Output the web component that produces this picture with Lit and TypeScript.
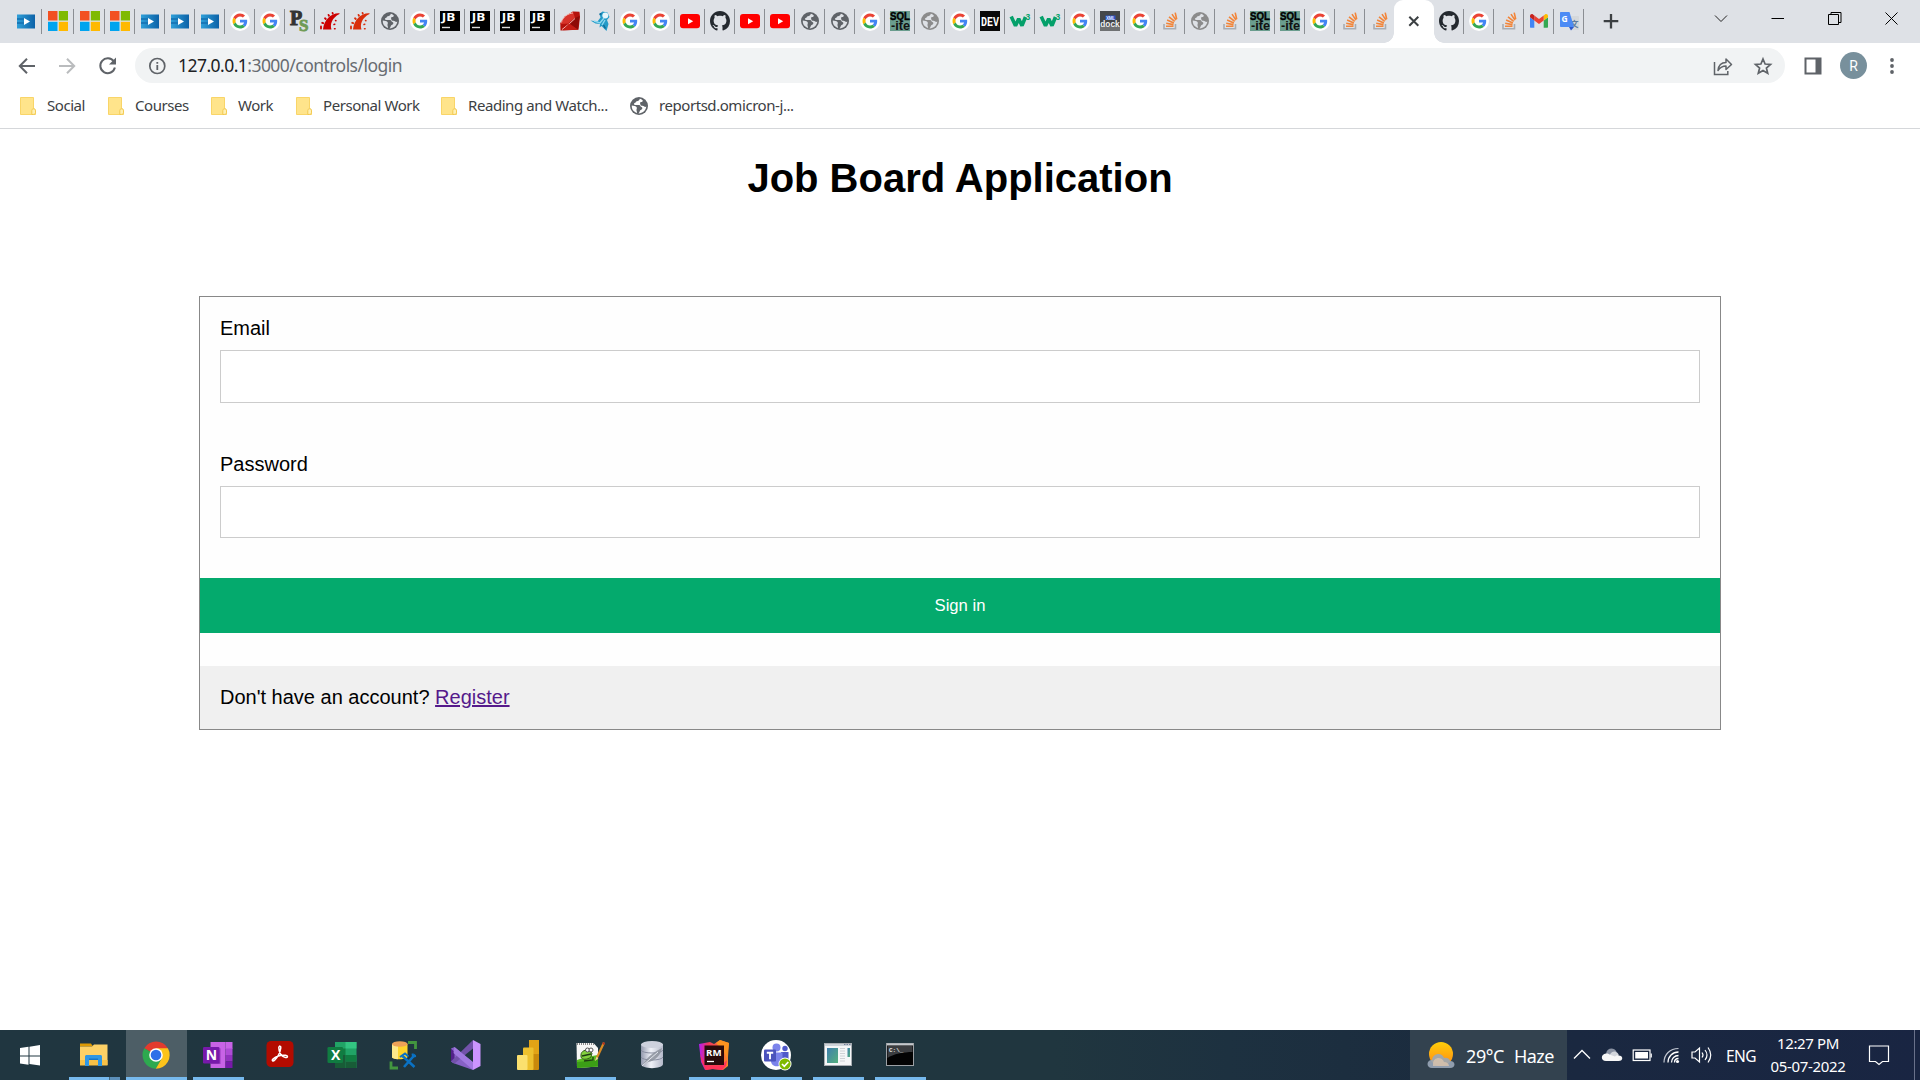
import { LitElement, html, svg, css, type TemplateResult } from "lit";
import { customElement } from "lit/decorators.js";

type Glyph = () => TemplateResult;

const icon = (body: TemplateResult, size = 20, box = "0 0 20 20") =>
  html`<svg width=${size} height=${size} viewBox=${box} fill="none">${body}</svg>`;

/* ---------- favicons ---------- */
const video: Glyph = () => icon(svg`
  <defs><linearGradient id="vd" x1="0" x2="1" y1="0" y2="0"><stop offset="0" stop-color="#2f9fd8"/><stop offset="1" stop-color="#0c62a8"/></linearGradient></defs>
  <rect x="1" y="3.500" width="18" height="14" fill="url(#vd)"/>
  <path d="M1 8h7M1 12h8" stroke="#1878b8" stroke-width="2"/>
  <path d="M8 7v7l6-3.500z" fill="#fff"/>`);
const msft: Glyph = () => icon(svg`
  <path d="M0 0h9.500v9.500H0z" fill="#f25022"/><path d="M10.800 0h9.200v9.500h-9.200z" fill="#7fba00"/>
  <path d="M0 10.800h9.500V20H0z" fill="#00a4ef"/><path d="M10.800 10.800H20V20h-9.200z" fill="#ffb900"/>`);
const google: Glyph = () => icon(svg`
  <circle cx="24" cy="24" r="32" fill="#fff"/>
  <path fill="#ea4335" d="M24 9.5c3.54 0 6.71 1.22 9.21 3.6l6.85-6.85C35.9 2.38 30.47 0 24 0 14.62 0 6.51 5.38 2.56 13.22l7.98 6.19C12.43 13.72 17.74 9.5 24 9.5z"/>
  <path fill="#4285f4" d="M46.98 24.55c0-1.57-.15-3.09-.38-4.55H24v9.02h12.94c-.58 2.96-2.26 5.48-4.78 7.18l7.73 6c4.51-4.18 7.09-10.36 7.09-17.65z"/>
  <path fill="#fbbc05" d="M10.53 28.59c-.48-1.45-.76-2.99-.76-4.59s.27-3.14.76-4.59l-7.98-6.19C.92 16.46 0 20.12 0 24c0 3.88.92 7.54 2.56 10.78l7.97-6.19z"/>
  <path fill="#34a853" d="M24 48c6.48 0 11.93-2.13 15.89-5.81l-7.73-6c-2.15 1.45-4.92 2.3-8.16 2.3-6.26 0-11.57-4.22-13.47-9.91l-7.98 6.19C6.51 42.62 14.62 48 24 48z"/>`, 20, "-8 -8 64 64");
const ps: Glyph = () => icon(svg`
  <text x="0" y="14" font-family="Liberation Serif, serif" font-weight="700" font-size="20" fill="#333" stroke="#333">P</text>
  <text x="9" y="20" font-family="Liberation Serif, serif" font-weight="700" font-size="17" fill="#6f9b55" stroke="#6f9b55" stroke-width=".9">S</text>`);
const rails = (c: string): Glyph => () => icon(svg`
  <path d="M3 18.500h8.500c-1.700-5 .2-11.500 8-15.500v-.8C12 1.500 4 8 3 18.500z" fill=${c}/>
  <path d="M1 17.500v-2M2.200 11.800l1 .4M5 7.300l.8.7M8.500 3.900l.5.9M12.500 1.800l.3.900" stroke=${c} stroke-width="1.8" stroke-linecap="round"/>
  <path d="M14 13.500l.8-.2M14.500 17.800h.6M15.500 9.500l.5.200" stroke=${c} stroke-width="1.500" stroke-linecap="round"/>`);
const globeWith = (c: string, bg: string): Glyph => () => icon(svg`
  <circle cx="10" cy="10" r="9" fill=${c}/>
  <path d="M10.800 2.700c-.4 1.700-1.300 2.300-3 2.500-1 .2-.8 1.500-2.200 1.700-.9.100-.6 2 .3 2.200h4.200c1.300.2 1.200 1.700 2.200 2 1 .300 1.300 1.100.800 2-.5 1-2 .8-2.300 2-.1.900-.6 1.700-1.300 2.300 3.900.100 7.300-2.600 7.800-6.800-.9.600-1.700.300-2.400-.3-.8-.8-2-.3-3-.8-.9-.5-.2-1.500-.8-2-.5-.5.200-1.400 1.200-1.400.9 0 .8-1 1.800-1.200-.8-1.100-1.900-1.900-3.300-2.200z" fill=${bg}/>
  <path d="M2.800 9.600c1.700.1 4.500.5 5 2 .3 1-.4 1.300-.300 2.300 0 .9.500 1.600.500 3C4.600 16 2.500 13.200 2.800 9.600z" fill=${bg}/>`);
const globe = globeWith("#5f6368", "#dee1e6");
const globeDim = globeWith("#8b8b8b", "#dee1e6");
const jb: Glyph = () => icon(svg`
  <rect width="20" height="20" fill="#000"/>
  <text x="1.800" y="10" font-family="Open Sans, sans-serif" font-weight="700" font-size="11" textLength="13.500" lengthAdjust="spacingAndGlyphs" fill="#fff">JB</text>
  <path d="M2 16.500h8" stroke="#ddd" stroke-width="1.400"/>`);
const ruby: Glyph = () => icon(svg`
  <path d="M.5 19.500L.3 12 5 5.500l8-5 6.500.3.500 5-1.500 13z" fill="#b5120c"/>
  <path d="M5 5.500l8-5 2 6.500-6 5.500-8.700.5z" fill="#d8332a"/>
  <path d="M15 7l4.500-2-1.500 13.800-9-6.800z" fill="#8e0b07"/>
  <path d="M1.500 11.500C2.500 6 8 2.500 13 2M15 7.500l-6 5.500-7 5.500" stroke="#f6b4ae" stroke-width="1"/>
  <path d="M9 12.500l9 6.300-15 .5z" fill="#c41d15"/>`);
const bird: Glyph = () => icon(svg`
  <path d="M.5 9.500l7 1 3-4L9.500 3l3-2.500 5 1L19.500 6l-2.500 3 1.500 4-2 7-5-5-2 1.500.5-3.500L5.500 12.500z" fill="#249bc8"/>
  <circle cx="15.300" cy="4.500" r="3" fill="#e8f6fb"/><path d="M4 10l6 2 4-5M12 14l3-5" stroke="#8fd9f1" stroke-width="1.400"/>
  <path d="M13.500 14l2 3.500M9.500 3.500l2-1" stroke="#116b96" stroke-width="1.500"/>`);
const youtube: Glyph = () => icon(svg`<rect y="3" width="20" height="14.300" rx="3" fill="#f00"/><path d="M8 7.200v6l5.200-3z" fill="#fff"/>`);
const github: Glyph = () => icon(svg`<path fill="#24292f" fill-rule="evenodd" d="M8 0C3.580 0 0 3.580 0 8c0 3.540 2.290 6.530 5.470 7.590.4.070.55-.17.55-.38 0-.19-.01-.82-.01-1.490-2.010.37-2.530-.49-2.690-.94-.09-.23-.48-.94-.82-1.130-.28-.15-.68-.52-.01-.53.63-.01 1.080.58 1.230.82.72 1.210 1.870.87 2.330.66.07-.52.28-.87.51-1.070-1.780-.2-3.640-.89-3.640-3.950 0-.87.31-1.590.82-2.150-.08-.2-.36-1.020.08-2.120 0 0 .67-.21 2.200.82.64-.18 1.320-.27 2-.27s1.360.09 2 .27c1.530-1.040 2.200-.82 2.200-.82.44 1.100.16 1.920.08 2.120.51.56.82 1.270.82 2.150 0 3.070-1.870 3.750-3.650 3.950.29.25.54.73.54 1.480 0 1.070-.01 1.930-.01 2.200 0 .21.15.46.55.38A8.010 8.010 0 0016 8c0-4.420-3.580-8-8-8z"/>`, 20, "0 0 16 16");
const sqlite: Glyph = () => icon(svg`
  <rect width="20" height="20" fill="#6a9d8e"/>
  <text x="0" y="9" font-family="Liberation Sans, sans-serif" font-weight="700" font-size="11" textLength="20" lengthAdjust="spacingAndGlyphs" fill="#000" stroke="#000" stroke-width=".4">SQL</text>
  <text x="1" y="18.800" font-family="Liberation Sans, sans-serif" font-weight="700" font-size="12" textLength="19" lengthAdjust="spacingAndGlyphs" fill="#111">-ite</text>`);
const dev: Glyph = () => icon(svg`
  <rect width="20" height="20" fill="#090909"/>
  <text x="1" y="14.800" font-family="Liberation Mono, monospace" font-weight="700" font-size="13" textLength="18" lengthAdjust="spacingAndGlyphs" fill="#fff">DEV</text>`);
const w3: Glyph = () => icon(svg`
  <path d="M1.200 5.500l4.300 9.200 3.200-7 3.300 7L15.500 6" stroke="#04a06a" stroke-width="3.600" stroke-linejoin="bevel"/>
  <text x="15.500" y="9" font-family="Liberation Sans, sans-serif" font-weight="700" font-size="8.500" fill="#04a06a">3</text>`);
const dock: Glyph = () => icon(svg`
  <rect width="20" height="20" fill="#44474a"/><rect y="15" width="20" height="5" fill="#6f7173"/>
  <rect x="5.500" y="4.500" width="10" height="4.500" fill="#2d55c7"/>
  <text x="6" y="8.500" font-family="Liberation Sans, sans-serif" font-weight="700" font-size="4.500" textLength="9" fill="#dfe6ff">XML</text>
  <text x=".3" y="15.500" font-family="Liberation Sans, sans-serif" font-weight="700" font-size="9.500" textLength="19.400" lengthAdjust="spacingAndGlyphs" fill="#eee">dock</text>`);
const stack: Glyph = () => icon(svg`
  <path d="M4 13v4.800h11.500V13" stroke="#a9adb3" stroke-width="1.600"/>
  <path d="M6 15.300h7.500M6.200 12.200l7.300 1.400M7.100 9l6.800 3M9 5.800l5.700 4.600M12 3.100l4 6M15.200 1.600l1.500 6.600" stroke="#f2853a" stroke-width="1.600"/>`);
const gmail: Glyph = () => icon(svg`
  <path d="M1.500 16.800h3.800V9.500L1 6.200v9.900c0 .4.200.7.500.7z" fill="#4285f4"/><path d="M14.700 16.800h3.700c.3 0 .6-.3.600-.7V6.200l-4.300 3.300z" fill="#34a853"/>
  <path d="M14.700 4.500v5L19 6.300V5c0-1.600-1.700-2.500-3-1.600z" fill="#fbbc04"/><path d="M5.300 9.500v-5L10 8l4.700-3.500v5L10 13z" fill="#ea4335"/>
  <path d="M1 5v1.300l4.300 3.200v-5L4 3.400C2.700 2.500 1 3.400 1 5z" fill="#c5221f"/>`);
const translate: Glyph = () => icon(svg`
  <path d="M8 5h11c.5 0 1 .5 1 1v12c0 .5-.5 1-1 1h-7z" fill="#d5d8db"/>
  <text x="11" y="15.500" font-family="Noto Sans CJK SC, sans-serif" font-size="8.500" font-weight="700" fill="#607d9b">文</text>
  <path d="M2 1h8.500L15 16H2c-.6 0-1-.5-1-1V2c0-.6.400-1 1-1z" fill="#4c8bf5"/><path d="M10 16h5l-3 3.500z" fill="#3059c9"/>
  <text x="2.600" y="10.800" font-family="Open Sans, sans-serif" font-weight="700" font-size="8.500" fill="#fff">G</text>`);

interface Tab { w: number; glyph: Glyph; bare?: boolean }
const t = (glyph: Glyph, w = 30, bare = false): Tab => ({ w, glyph, bare });
const railsA = rails("#cc0000"), railsB = rails("#d92e0c");

const tabsBefore: Tab[] = [
  t(video, 32), t(msft, 32), t(msft, 31), t(msft), t(video), t(video), t(video), t(google), t(google), t(ps),
  t(railsA), t(railsB), t(globe), t(google), t(jb), t(jb), t(jb), t(jb), t(ruby), t(bird),
  t(google), t(google), t(youtube), t(github), t(youtube), t(youtube), t(globe), t(globe), t(google), t(sqlite),
  t(globeDim), t(google), t(dev), t(w3), t(w3), t(google), t(dock), t(google), t(stack), t(globeDim),
  t(stack), t(sqlite), t(sqlite), t(google), t(stack), t(stack, 29, true),
];
const tabsAfter: Tab[] = [t(github), t(google), t(stack), t(gmail), t(translate)];

/* ---------- taskbar icons ---------- */
const big = (body: TemplateResult) => icon(body, 30, "0 0 30 30");
const explorer = () => big(svg`
  <path d="M1 3.500h11l2 3H1z" fill="#dd9a04"/><path d="M1 6.500h12l2-2h13.500V25H1z" fill="#fdd166"/><path d="M1 20h27.500v5.500H1z" fill="#f8c146"/>
  <path d="M6 26V16.500c0-.8.700-1.500 1.500-1.500h14c.8 0 1.500.7 1.500 1.500V26h-4v-6h-9v6z" fill="#2f97e4"/><path d="M10 20h9v-1.500h-9z" fill="#1676c8"/>`);
const chrome = () => big(svg`
  <path d="M15 15L3.300 8.200A13.700 13.700 0 0 1 26.900 8.200z" fill="#e33b2e"/><path d="M15 15L3.300 8.200A13.700 13.700 0 0 0 14.800 28.700L21 18z" fill="#2da94f"/>
  <path d="M15 8.300h11.900A13.700 13.700 0 0 1 14.800 28.700L21 18z" fill="#fcc31b"/>
  <circle cx="15" cy="15" r="6.800" fill="#fff"/><circle cx="15" cy="15" r="5.300" fill="#2f6fe8"/>`);
const onenote = () => big(svg`
  <rect x="7.500" y="2" width="15" height="26" fill="#c863e6"/><rect x="22.500" y="2" width="7" height="7" fill="#c863e6"/>
  <rect x="22.500" y="8.500" width="7" height="6.500" fill="#ae4bd5"/><rect x="22.500" y="15" width="7" height="6.500" fill="#9332bf"/><rect x="22.500" y="21.500" width="7" height="6.500" fill="#7719aa"/>
  <path d="M7.500 24h10V8z" fill="#983dbd"/><rect x="0" y="7" width="16.500" height="16.500" rx="1.300" fill="#7719aa"/>
  <text x="2.700" y="20" font-family="Open Sans, sans-serif" font-weight="700" font-size="14" fill="#fff">N</text>`);
const acrobat = () => big(svg`
  <rect x="1.500" y="1" width="27" height="26" rx="4.500" fill="#b30b00"/>
  <path d="M13.800 7.500c.300-2 2.300-1.800 2 .5-.7 4.500-3.500 9.500-6 12-1.800 1.800-3.500.800-1.800-.900 3.200-3 8.500-4.300 12.500-3.800 2.800.500 2.500 2.500 0 2.200-4-.8-6.700-5-6.700-10z" stroke="#fff" stroke-width="1.500"/>`);
const excel = () => big(svg`
  <rect x="8" y="2" width="21.500" height="26" fill="#21a366"/><rect x="18.500" y="2" width="11" height="6.500" fill="#33c481"/><rect x="8" y="8.500" width="10.500" height="6.500" fill="#107c41"/>
  <rect x="18.500" y="15" width="11" height="6.500" fill="#107c41"/><rect x="8" y="15" width="10.500" height="13" fill="#185c37"/><rect x="18.500" y="21.500" width="11" height="6.500" fill="#185c37"/>
  <rect x=".5" y="7" width="15.500" height="16" rx="1.300" fill="#107c41"/>
  <text x="4" y="20" font-family="Open Sans, sans-serif" font-weight="700" font-size="14" fill="#fff">X</text>`);
const dataTool = () => big(svg`
  <path d="M19 2.500h7.500V9M2 21.500v6.500h7" stroke="#43963f" stroke-width="2.800"/>
  <path d="M3 4v13c0 3 15.500 3 15.500 0V4z" fill="#ffd52b"/><path d="M3 4v13c0 1.300 3 2.200 6 2.300V6z" fill="#ffe98a"/><ellipse cx="10.800" cy="4" rx="7.800" ry="2.800" fill="#efa257"/>
  <path d="M15 27L26 14.500M13.500 16l12 11" stroke="#0a72c4" stroke-width="2.600"/><path d="M11 17l5-3.500 3.500 3M23.500 13.500l.5 3 3-.5" stroke="#0a72c4" stroke-width="2"/>`);
const vstudio = () => big(svg`
  <path d="M0 8.500L3.500 7 22 22.500V30L2 23l-2-1.500z" fill="#8661c5"/><path d="M0 21.500L22 0v8.500L3.500 23.500z" fill="#7252aa"/>
  <path d="M0 8.500l3.500 3.500v6L0 21.500z" fill="#52218a"/><path d="M3.500 7L22 22v8L2.500 13z" fill="#a179e0"/>
  <path d="M22 0l7.500 4v22L22 30z" fill="#cb94ff"/>`);
const powerbi = () => big(svg`
  <rect x="16" y="0" width="10" height="30" rx="1" fill="#c9890b"/><rect x="16" width="10" height="14" fill="#e2a316"/>
  <rect x="10" y="7.500" width="10.500" height="22.500" rx="1" fill="#edc02d"/><rect x="4" y="15" width="10.500" height="15" rx="1" fill="#fbe06e"/>`);
const notepad = () => big(svg`
  <path d="M1.500 3h17l4.500 5v18.500L2 28z" fill="#f7f7f5"/><path d="M2 20l9-3 12-2v11.500L2 28z" fill="#59bd22"/><path d="M2 22l21-2v6.500L2 28z" fill="#3b9f16"/>
  <path d="M2 4h17" stroke="#888" stroke-width="2" stroke-dasharray="1 1"/>
  <path d="M6 15c0-4 5-6 8-4l3 2-1 4c-4 3-9 3-10 0z" fill="#83d13e" stroke="#355e18"/><path d="M7 16l9-2M9 21l9-1v-3" stroke="#1e3e12" stroke-width="1.300"/>
  <circle cx="12.500" cy="10" r="2" fill="#fff" stroke="#555"/><circle cx="16" cy="10" r="2" fill="#fff" stroke="#555"/>
  <path d="M20 21l1.500-5L28 2l2 1-6.500 14z" fill="#d88a22"/><path d="M20 21l1.500-4 2 1z" fill="#f4d6a3"/><path d="M28 2l2 1-.8 2-2-1z" fill="#ab2e24"/>`);
const sqldb = () => big(svg`
  <defs><linearGradient id="cyl" x1="0" x2="1" y1="0" y2="0"><stop offset="0" stop-color="#9399ad"/><stop offset=".45" stop-color="#f0f2f8"/><stop offset="1" stop-color="#b4b9c9"/></linearGradient></defs>
  <path d="M4 4v20c0 5.500 22 5.500 22 0V4z" fill="url(#cyl)"/><ellipse cx="15" cy="4.500" rx="11" ry="3.600" fill="#cdd1dd"/>
  <path d="M4 10c1 4 21 4 22 0M4 17c1 4 21 4 22 0" stroke="#878d9f" stroke-width="1"/>
  <path d="M5 26c4-6 6-11 20-18-1 7-7 13-14 14z" fill="#8c929c" opacity=".85"/><path d="M5 26L21 12" stroke="#e2e5ec"/>`);
const rubymine = () => big(svg`
  <defs><linearGradient id="rm" x1="0" y1="0" x2="1" y2="0"><stop offset="0" stop-color="#b31cf4"/><stop offset=".3" stop-color="#f2365c"/><stop offset="1" stop-color="#fc8a26"/></linearGradient></defs>
  <path d="M0 4l11-2 4 2 6-4 9 3-1 14 0 9-5 4-11-1-7 1-4-8z" fill="url(#rm)"/><path d="M17 3l4-3 9 3-2 15-4-8z" fill="#fc9320"/><path d="M1 14l6 12 16-1 5-5-1 6-4 4-9-1-7 1-4-8z" fill="#ff3358"/>
  <rect x="5.500" y="5.500" width="19.500" height="19.500" fill="#290b0b"/>
  <text x="7" y="15.500" font-family="Open Sans, sans-serif" font-weight="700" font-size="9.500" textLength="15.500" lengthAdjust="spacingAndGlyphs" fill="#fff">RM</text><path d="M8 21.500h7" stroke="#fff" stroke-width="1.300"/>`);
const teams = () => big(svg`
  <circle cx="15" cy="15" r="15" fill="#fff"/><circle cx="15.500" cy="7.500" r="4" fill="#7b83eb"/><circle cx="24" cy="8.500" r="2.700" fill="#5059c9"/>
  <path d="M20 12h7.500v7a4 4 0 0 1-7.500 2z" fill="#5059c9"/><path d="M10 12.500h11.500V21c0 7-11.500 7-11.500 0z" fill="#7b83eb"/>
  <rect x="3" y="9.500" width="12" height="12" rx="1" fill="#4b53bc"/><path d="M5.800 12.800h6.400M9 12.800v6.500" stroke="#fff" stroke-width="1.900"/>
  <circle cx="24" cy="24" r="6.500" fill="#fff"/><circle cx="24" cy="24" r="5.600" fill="#7fb900"/><path d="M21 24l2.300 2.300 4-4.300" stroke="#fff" stroke-width="1.700"/>`);
const appWindow = () => big(svg`
  <defs><linearGradient id="aw" x1="0" y1="0" x2="1" y2="1"><stop offset="0" stop-color="#3f7fae"/><stop offset="1" stop-color="#54b07d"/></linearGradient></defs>
  <rect x="1.500" y="3.500" width="27" height="22" fill="#f5f7f8" stroke="#a8adb2"/><path d="M2 5h26" stroke="#cdd3d9" stroke-width="2"/><path d="M21 4.500h7" stroke="#71809a" stroke-dasharray="1.500 1"/>
  <rect x="4" y="8" width="11" height="15" fill="url(#aw)"/><path d="M17 8.500h5M17 11h5M17 13.500h5M17 16h5M17 18.500h5M17 21h5" stroke="#cfd2d6"/><rect x="24.500" y="8" width="2.500" height="9" fill="url(#aw)"/>`);
const cmd = () => big(svg`
  <rect x="1.500" y="3.500" width="27" height="22" fill="#030303" stroke="#9ca0a4"/><path d="M2 4.500h26" stroke="#c4c8cc" stroke-width="2"/>
  <path d="M2.500 6h25v6C19 12 8 14 2.500 18z" fill="#3b3d40"/>
  <text x="4" y="11.500" font-family="Liberation Mono, monospace" font-weight="700" font-size="6" fill="#e8e8e8">C:\\_</text>`);

interface App { glyph: () => TemplateResult; state?: string }
const apps: App[] = [
  { glyph: explorer, state: "open multi" }, { glyph: chrome, state: "active" }, { glyph: onenote, state: "open" },
  { glyph: acrobat }, { glyph: excel }, { glyph: dataTool }, { glyph: vstudio }, { glyph: powerbi },
  { glyph: notepad, state: "open" }, { glyph: sqldb }, { glyph: rubymine, state: "open" },
  { glyph: teams, state: "open" }, { glyph: appWindow, state: "open" }, { glyph: cmd, state: "open" },
];

/* ---------- browser window ---------- */
@customElement("browser-tabs")
class BrowserTabs extends LitElement {
  static styles = css`
    :host { display: flex; height: 43px; background: #dee1e6; padding-left: 10px; box-sizing: border-box; }
    .tab { display: flex; justify-content: center; padding-top: 11px; flex: none; box-sizing: border-box;
      background: linear-gradient(#8b8e93, #8b8e93) no-repeat right 9px / 1px 25px; }
    .tab.bare { background: none; }
    svg { display: block; flex: none; overflow: visible; }
    .active { position: relative; width: 40px; background: #fff; border-radius: 9px 9px 0 0; flex: none; display: flex; justify-content: center; padding-top: 11px; box-sizing: border-box; }
    .active::before, .active::after { content: ""; position: absolute; bottom: 0; width: 10px; height: 10px; }
    .active::before { right: 100%; background: radial-gradient(circle at 0 0, transparent 9.5px, #fff 10px); }
    .active::after { left: 100%; background: radial-gradient(circle at 100% 0, transparent 9.5px, #fff 10px); }
    .add { width: 54px; display: flex; justify-content: center; padding-top: 11px; }
    .spacer { flex: 1; }
    .controls { display: flex; }
    .control { display: flex; justify-content: center; width: 57px; padding-top: 9px; }
  `;
  private tab(d: Tab) {
    return html`<div class="tab ${d.bare ? "bare" : ""}" style="width:${d.w}px">${d.glyph()}</div>`;
  }
  render() {
    return html`
      ${tabsBefore.map((d) => this.tab(d))}
      <div class="active">${icon(svg`<path d="M5.300 5.800l9 9M14.300 5.800l-9 9" stroke="#3c4043" stroke-width="2"/>`)}</div>
      ${tabsAfter.map((d) => this.tab(d))}
      <div class="add">${icon(svg`<path d="M10 3v14.500M2.700 10.200h14.600" stroke="#3c4043" stroke-width="2.300"/>`)}</div>
      <div class="spacer"></div>
      <div class="controls">
        <div class="control">${icon(svg`<path d="M4 6.500l6 6 6-6" stroke="#222" stroke-width="1"/>`)}</div>
        <div class="control">${icon(svg`<path d="M3.500 9.500h12.500" stroke="#000" stroke-width="1"/>`)}</div>
        <div class="control">${icon(svg`<path d="M3.500 5.500h10v10h-10zM6 5.500V3.500h10v10h-2" stroke="#000" stroke-width="1"/>`)}</div>
        <div class="control">${icon(svg`<path d="M3.500 3.500l12 12M15.500 3.500l-12 12" stroke="#000" stroke-width="1"/>`)}</div>
      </div>`;
  }
}

@customElement("browser-toolbar")
class BrowserToolbar extends LitElement {
  static styles = css`
    :host { display: block; background: #fff; height: 86px; border-bottom: 1px solid #d5d7da; box-sizing: border-box; font-family: "Open Sans", sans-serif; }
    .row { display: flex; align-items: center; height: 35px; padding: 5px 18px 0 17px; }
    svg { display: block; flex: none; }
    .nav { display: flex; gap: 20px; width: 118px; }
    .url { flex: 1; height: 35px; border-radius: 18px; background: #f1f3f4; display: flex; align-items: center; padding: 0 12px 0 12px; }
    .address { margin-left: 11px; font-family: "Noto Sans", sans-serif; font-size: 17.500px; letter-spacing: -.54px; line-height: 35px; color: #686c71; flex: 1; }
    .host { color: #202124; }
    .actions { display: flex; gap: 20px; }
    .side { display: flex; align-items: center; margin-left: 18px; gap: 17px; }
    .avatar { width: 27px; height: 27px; border-radius: 50%; background: #78909c; color: #fff; font: 14px/28px Roboto, sans-serif; text-align: center; margin-right: -2px; }
    .marks { display: flex; align-items: center; height: 40px; padding: 3px 0 0 17px; }
    .mark { display: flex; align-items: center; gap: 10px; font-family: "Noto Sans", sans-serif; font-size: 15px; letter-spacing: -.44px; color: #3c4043; white-space: nowrap; flex: none; }
    .label { flex: 1; padding-bottom: 2px; }
  `;
  private folder = () => icon(svg`
    <path d="M3.500 1.500h13v11.300c1.500 0 2 .8 2 2.200v3.500h-15z" fill="#ffe48b" stroke="#f9d568"/>
    <path d="M14.800 18.500v-3.800c0-1.200.7-1.900 1.800-1.900s1.900.7 1.900 1.900v2c0 1.200-.9 1.800-3.700 1.800z" fill="#fff0b4" stroke="#f3c94f"/>`);
  private marks: [string, number][] = [
    ["Social", 88], ["Courses", 103], ["Work", 85], ["Personal Work", 145], ["Reading and Watch...", 191], ["reportsd.omicron-j...", 190],
  ];
  render() {
    const c = "#5f6368";
    return html`
      <div class="row">
        <div class="nav">
          ${icon(svg`<path d="M18 10H3.500M10 2.800L2.800 10l7.200 7.200" stroke=${c} stroke-width="2"/>`)}
          ${icon(svg`<path d="M2 10h14.500M10 2.800l7.200 7.200-7.200 7.200" stroke="#babcbe" stroke-width="2"/>`)}
          ${icon(svg`<path d="M16.800 5.500A7.400 7.400 0 1 0 17.900 11.500" stroke=${c} stroke-width="2"/><path d="M19 1.500v7h-7z" fill=${c}/>`)}
        </div>
        <div class="url">
          ${icon(svg`<circle cx="10.300" cy="10" r="7.500" stroke=${c} stroke-width="1.700"/><path d="M10.300 9v5M10.300 6v1.800" stroke=${c} stroke-width="1.800"/>`)}
          <div class="address"><span class="host">127.0.0.1</span>:3000/controls/login</div>
          <div class="actions">
            ${icon(svg`<path d="M1.500 6v12.500h13.300V15" stroke=${c} stroke-width="1.500"/><path d="M5 14.500c.5-5 3.300-8 8-8V3l5.500 5.500-5.500 5V10c-3.500 0-5.800 1.300-8 4.500z" stroke=${c} stroke-width="1.500" stroke-linejoin="round"/>`)}
            ${icon(svg`<path d="M10 3l2.100 5 5.400.5-4.100 3.500 1.300 5.300L10 14.500l-4.700 2.800 1.300-5.300-4.100-3.500 5.400-.5z" stroke=${c} stroke-width="1.700"/>`)}
          </div>
        </div>
        <div class="side">
          ${icon(svg`<path d="M2.500 2.500h15v15h-15z" stroke=${c} stroke-width="2"/><path d="M12.500 2h5v16h-5z" fill=${c}/>`)}
          <div class="avatar">R</div>
          ${icon(svg`<circle cx="10" cy="4" r="1.900" fill=${c}/><circle cx="10" cy="10" r="1.900" fill=${c}/><circle cx="10" cy="16" r="1.900" fill=${c}/>`)}
        </div>
      </div>
      <div class="marks">
        ${this.marks.map(([label, w], i) => html`
          <div class="mark" style="width:${w}px">
            ${i === 5 ? globeWith("#5f6368", "#fff")() : this.folder()}<span class="label">${label}</span>
          </div>`)}
      </div>`;
  }
}

@customElement("login-page")
class LoginPage extends LitElement {
  static styles = css`
    :host { display: block; flex: 1; background: #fff; color: #000; font-family: "Liberation Sans", Arial, sans-serif; font-size: 20px; line-height: 23px; }
    .title { margin: 0; padding-top: 26px; font-size: 40px; line-height: 46px; font-weight: 700; text-align: center; }
    .card { margin: 95px 199px 0; height: 434px; box-sizing: border-box; border: 1px solid #888; background: #fefefe; display: flex; flex-direction: column; }
    .fields { padding: 20px 20px 0; display: flex; flex-direction: column; }
    .label { display: block; margin-bottom: 10px; }
    .input { display: block; width: 100%; height: 53px; box-sizing: border-box; border: 1px solid #ccc; background: #fff; outline: 0; padding: 15px 25px; }
    .second { margin-top: 50px; }
    .second-input { height: 52px; }
    .submit { margin-top: 40px; height: 55px; flex: none; border: 0; background: #04aa6d; color: #fff; font: 16.667px/19px "Liberation Sans", Arial, sans-serif; padding: 0; }
    .foot { margin-top: 33px; flex: 1; background: #f0f0f0; padding: 20px; box-sizing: border-box; }
    .link { color: #551a8b; text-decoration: underline; }
  `;
  render() {
    return html`
      <h1 class="title">Job Board Application</h1>
      <div class="card">
        <div class="fields">
          <label class="label">Email</label><input class="input" type="text" />
          <label class="label second">Password</label><input class="input second-input" type="password" />
        </div>
        <button class="submit">Sign in</button>
        <div class="foot">Don't have an account? <a class="link" href="#">Register</a></div>
      </div>`;
  }
}

@customElement("task-bar")
class TaskBar extends LitElement {
  static styles = css`
    :host { display: flex; height: 50px; flex: none; color: #fff; font-family: "Noto Sans", sans-serif; background: linear-gradient(90deg, #203640 0, #20363f 55%, #1d3140 64%, #1b2b3e 76%, #1a2840 82%, #192542 100%); }
    svg { display: block; flex: none; overflow: visible; }
    .start { width: 64px; display: flex; align-items: center; padding-left: 20px; box-sizing: border-box; }
    .app { position: relative; width: 61px; margin-right: 1px; display: flex; justify-content: center; padding: 10px 2px 0 0; box-sizing: border-box; }
    .open::after, .active::after { content: ""; position: absolute; bottom: 0; left: 5px; width: 51px; height: 3px; background: #76b9ed; }
    .active { background: #4d5e66; }
    .active::after { left: 0; width: 61px; }
    .multi::after { background: linear-gradient(90deg, #76b9ed 40px, #44697f 40px, #44697f 41px, #5b8fb9 41px); }
    .spacer { flex: 1; }
    .weather { width: 157px; background: #33424f; display: flex; align-items: center; font-size: 18px; letter-spacing: -.4px; padding-left: 16px; box-sizing: border-box; margin-right: 4px; }
    .temp { margin: 2px 10px 0 10px; }
    .cond { margin-top: 2px; letter-spacing: -.6px; }
    .tray { display: flex; align-items: center; gap: 10px; padding-left: 1px; width: 154px; box-sizing: border-box; }
    .tray.lang { font-size: 15.500px; letter-spacing: -.6px; width: 37px; margin-top: 1px; }
    .clock { width: 92px; text-align: center; font-size: 15px; line-height: 23px; letter-spacing: -.35px; padding-top: 2px; white-space: nowrap; }
    .note { margin-left: 15px; display: flex; align-items: center; width: 45px; }
    .edge { width: 1px; background: #69718a; margin-right: 5px; }
  `;
  render() {
    return html`
      <div class="start">${icon(svg`<path d="M0 3l8.500-1.200v8.700H0zM9.500 1.700L20 0v10.500H9.500zM0 11.500h8.500v8.200L0 18.500zM9.500 11.500H20v9L9.500 19z" fill="#fff"/>`)}</div>
      ${apps.map((a) => html`<div class="app ${a.state ?? ""}">${a.glyph()}</div>`)}
      <div class="spacer"></div>
      <div class="weather">
        ${big(svg`
          <defs><linearGradient id="sun" x1="0" y1="0" x2="0" y2="1"><stop offset="0" stop-color="#ffce0a"/><stop offset="1" stop-color="#ff8a14"/></linearGradient></defs>
          <circle cx="15" cy="14" r="12" fill="url(#sun)"/>
          <path d="M6 28c-6 0-6-8 0-8 1-7 10-8 12-2 3-1 6 1 6 3 6 0 6 7 0 7z" fill="#9aa7b8" opacity=".9"/><path d="M7 24c0-7 9-8 11-2 3 0 5 2 5 4H7z" fill="#dec6ae" opacity=".75"/>`)}
        <span class="temp">29°C</span><span class="cond">Haze</span>
      </div>
      <div class="tray">
        ${icon(svg`<path d="M2 13.500L10 5.500l8 8" stroke="#fff" stroke-width="1.300"/>`)}
        ${icon(svg`<path d="M4 8.500C5 2.500 12 2 14.500 6.500L9 13z" fill="#8b93a3"/><path d="M4 16c-5.500 0-5.500-7 0-7.500 2-.3 3 .5 4 1.200 3-3.300 8-2 8.500.8 5 0 5 5.500 0 5.500z" fill="#f7f7f7"/><path d="M8 9.700c2-4.500 7.500-4 9 .8-1.500-.5-3 0-4 1z" fill="#d3d6dc"/>`)}
        ${icon(svg`<rect x="1.200" y="5" width="16.800" height="10.500" stroke="#fff" stroke-width="1.200"/><rect x="3.200" y="7" width="12.800" height="6.500" fill="#fff"/><path d="M19.200 8.500v4" stroke="#fff" stroke-width="1.300"/>`)}
        ${icon(svg`<path d="M2 17.500C2 9.500 8 3.500 16.500 3.500" stroke="#c3c8d2" stroke-width="1.200"/><path d="M6 17.500c0-6 4.500-10.500 10.500-10.500M9.500 17.500c0-4 3-7 7-7M12.500 17.500c0-2.300 1.700-4 4-4" stroke="#fff" stroke-width="1.300"/><circle cx="15.500" cy="16.500" r="1.600" fill="#fff"/>`)}
        ${icon(svg`<path d="M0 7h3l4.500-4v14L3 13H0z" stroke="#fff" stroke-width="1.200"/><path d="M10 7.500q2 2.500 0 5M13 5q4 5 0 10M16 2.500q5.500 7.500 0 15" stroke="#fff" stroke-width="1.200"/>`)}
      </div>
      <div class="tray lang">ENG</div>
      <div class="clock">12:27 PM<br />05-07-2022</div>
      <div class="note">${icon(svg`<path d="M.5 1h19v15.500h-6L10 19.500l-3.500-3H.5z" stroke="#fff" stroke-width="1.200"/>`)}</div>
      <div class="edge"></div>`;
  }
}

@customElement("app-root")
class AppRoot extends LitElement {
  static styles = css`
    :host { display: flex; flex-direction: column; width: 1920px; height: 1080px; overflow: hidden; background: #fff; }
  `;
  render() {
    return html`<browser-tabs></browser-tabs><browser-toolbar></browser-toolbar><login-page></login-page><task-bar></task-bar>`;
  }
}
